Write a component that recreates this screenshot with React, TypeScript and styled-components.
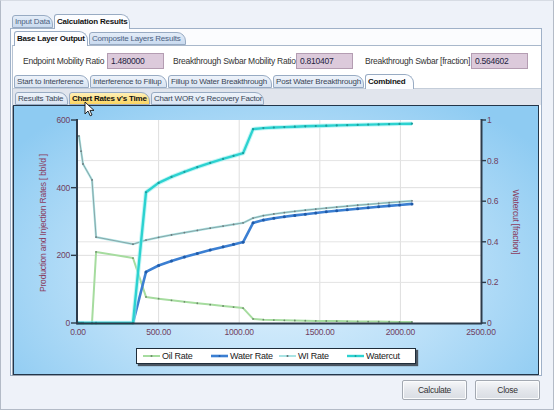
import React from 'react';
import styled, { createGlobalStyle } from 'styled-components';

const GlobalStyle = createGlobalStyle`
  html, body { margin: 0; padding: 0; background: #eef2f9; }
  body { font-family: 'Liberation Sans', Arial, sans-serif; }
`;

// ---- chart maths (page coordinates, the svg viewBox is offset to match) ----
const X0 = 78;
const X1 = 481;
const Y0 = 322;
const YT = 119;
const px = (t: number) => X0 + (t * (X1 - X0)) / 2500;
const pyL = (v: number) => Y0 - (v * (Y0 - YT)) / 600;
const pyR = (w: number) => Y0 - w * (Y0 - YT);

const early = [0, 6, 19, 31, 87, 112, 341];
const mid = [422, 500, 580, 660, 740, 820, 900, 965, 1024];
const late = [1086, 1150, 1215, 1280, 1345, 1410, 1475, 1540, 1605, 1670, 1735, 1800, 1865, 1930, 1995, 2072];
const fm = (t: number, e: number) => Math.pow((t - 422) / 602, e);
const fl = (t: number, e: number) => Math.pow((t - 1086) / 986, e);

const oil: number[][] = [
  [0, 0], [6, 0], [19, 0], [31, 0], [87, 0], [112, 210], [341, 192],
  ...mid.map((t) => [t, 77 - 33 * fm(t, 0.9)]),
  ...late.map((t) => [t, 12 - 9 * fl(t, 0.5)]),
];
const wi: number[][] = [
  [6, 553], [19, 508], [31, 470], [87, 423], [112, 254], [341, 233],
  ...mid.map((t) => [t, 245 + 51 * fm(t, 0.9)]),
  ...late.map((t) => [t, 310 + 51 * fl(t, 0.7)]),
];
const water: number[][] = [
  ...early.map((t) => [t, 0]),
  ...mid.map((t) => [t, 151 + 88 * fm(t, 0.75)]),
  ...late.map((t) => [t, 296 + 56 * fl(t, 0.7)]),
];
const watercut: number[][] = [
  ...early.map((t) => [t, 0]),
  ...mid.map((t) => [t, 0.644 + 0.193 * fm(t, 0.7)]),
  ...late.map((t) => [t, 0.955 + 0.027 * fl(t, 0.6)]),
];

const toPts = (d: number[][], right = false) =>
  d.map(([t, v]) => [px(t), right ? pyR(v) : pyL(v)]);
const toPath = (p: number[][]) => p.map(([x, y], i) => `${i ? 'L' : 'M'}${x.toFixed(1)} ${y.toFixed(1)}`).join(' ');

type SeriesProps = { pts: number[][]; color: string; width: number; glow?: string; dot: string; r: number };

const Series: React.FC<SeriesProps> = ({ pts, color, width, glow, dot, r }) => (
  <g>
    {glow && <path d={toPath(pts)} fill="none" stroke={glow} strokeWidth={width + 2} strokeLinejoin="round" opacity={0.6} />}
    <path d={toPath(pts)} fill="none" stroke={color} strokeWidth={width} strokeLinejoin="round" />
    {pts.map(([x, y], i) => (
      <circle key={i} cx={x} cy={y} r={r} fill={dot} />
    ))}
  </g>
);

const leftTicks = [0, 200, 400, 600];
const rightTicks = [0, 0.2, 0.4, 0.6, 0.8, 1];
const xTicks = [0, 500, 1000, 1500, 2000, 2500];

const RatesChart: React.FC = () => (
  <PlotSvg width={524} height={240} viewBox="14 105 524 240">
    <rect x={X0} y={YT} width={X1 - X0} height={Y0 - YT} fill="#ffffff" />
    {xTicks.slice(1, 5).map((t) => (
      <line key={t} x1={px(t)} x2={px(t)} y1={YT} y2={Y0} stroke="#dedede" />
    ))}
    {[200, 400].map((v) => (
      <line key={v} x1={X0} x2={X1} y1={pyL(v)} y2={pyL(v)} stroke="#dedede" />
    ))}
    {[0.2, 0.4, 0.6, 0.8].map((w) => (
      <line key={w} x1={X0} x2={X1} y1={pyR(w)} y2={pyR(w)} stroke="#e4e4e4" />
    ))}

    <Series pts={toPts(oil)} color="#a6dc9f" width={2} dot="#6d8a6a" r={0.9} />
    <Series pts={toPts(wi)} color="#a9e4e4" width={2.2} dot="#5f6e70" r={0.9} />
    <path d={toPath(toPts(wi))} fill="none" stroke="#7c8a8c" strokeWidth={0.7} />
    <Series pts={toPts(water)} color="#3b7fd2" width={2.6} dot="#1f5aa8" r={1.5} />
    <Series pts={toPts(watercut, true)} color="#2cd2d0" width={2.4} glow="#9ef0f0" dot="#1b9c9c" r={1.1} />

    <line x1={77} x2={77} y1={YT - 1} y2={Y0 + 1} stroke="#2d3b4a" strokeWidth={2} />
    <line x1={X1 + 0.5} x2={X1 + 0.5} y1={YT - 1} y2={Y0 + 1} stroke="#2d3b4a" strokeWidth={2} />
    <line x1={76} x2={X1 + 1} y1={Y0 + 0.5} y2={Y0 + 0.5} stroke="#2d3b4a" strokeWidth={2} />

    {leftTicks.map((v) => (
      <g key={v}>
        <line x1={71} x2={77} y1={pyL(v)} y2={pyL(v)} stroke="#2d3b4a" strokeWidth={1.4} />
        <AxisText x={70} y={pyL(v) + 3} textAnchor="end">{v}</AxisText>
      </g>
    ))}
    {rightTicks.map((w) => (
      <g key={w}>
        <line x1={X1} x2={X1 + 5} y1={pyR(w)} y2={pyR(w)} stroke="#2d3b4a" strokeWidth={1.4} />
        <AxisText x={X1 + 6} y={pyR(w) + 3}>{w}</AxisText>
      </g>
    ))}
    {xTicks.map((t) => (
      <AxisText key={t} x={px(t)} y={334} textAnchor="middle">{t.toFixed(2)}</AxisText>
    ))}

    <AxisTitle transform="translate(46 222) rotate(-90)" textAnchor="middle">
      Production and Injection Rates [ bbl/d ]
    </AxisTitle>
    <AxisTitle transform="translate(513 221) rotate(90)" textAnchor="middle">
      Watercut [fraction]
    </AxisTitle>
  </PlotSvg>
);

const legendItems = [
  { name: 'Oil Rate', color: '#a6dc9f', w: 2, dot: '#6d8a6a' },
  { name: 'Water Rate', color: '#3b7fd2', w: 2.6, dot: '#1f5aa8' },
  { name: 'WI Rate', color: '#a9e4e4', w: 2, dot: '#5f6e70' },
  { name: 'Watercut', color: '#2cd2d0', w: 2.4, dot: '#1b9c9c' },
];

const Cursor: React.FC = () => (
  <CursorSvg width={11} height={16} viewBox="0 0 11 16">
    <path d="M1 1 L1 13 L4 10 L6.2 14.8 L8 14 L5.9 9.4 L10 9.4 Z" fill="#ffffff" stroke="#111" strokeWidth={0.9} strokeLinejoin="round" />
  </CursorSvg>
);

export default function App() {
  return (
    <>
      <GlobalStyle />
      <Window>
        <TabRow>
          <Tab $w={41}>Input Data</Tab>
          <Tab $w={76} $active>Calculation Results</Tab>
        </TabRow>
        <OuterPanel>
          <TabRow>
            <Tab $w={74} $active>Base Layer Output</Tab>
            <Tab $w={97}>Composite Layers Results</Tab>
          </TabRow>
          <InnerPanel>
            <FieldRow>
              <Label $w={84}>Endpoint Mobility Ratio</Label>
              <Value $gap={9}>1.480000</Value>
              <Label $w={123}>Breakthrough Swbar Mobility Ratio</Label>
              <Value $gap={12}>0.810407</Value>
              <Label $w={106}>Breakthrough Swbar [fraction]</Label>
              <Value $gap={0}>0.564602</Value>
            </FieldRow>
            <PhaseTabs>
              <Tab $w={75} $light>Start to Interference</Tab>
              <Tab $w={77} $light>Interference to Fillup</Tab>
              <Tab $w={104} $light>Fillup to Water Breakthrough</Tab>
              <Tab $w={91} $light>Post Water Breakthrough</Tab>
              <Tab $w={49} $active>Combined</Tab>
            </PhaseTabs>
            <ViewBand>
              <TabRow>
                <Tab $w={53} $light>Results Table</Tab>
                <Tab $w={81} $hot>Chart Rates v's Time</Tab>
                <Tab $w={113} $light>Chart WOR v's Recovery Factor</Tab>
              </TabRow>
              <Cursor />
            </ViewBand>
            <ChartArea>
              <RatesChart />
              <Legend>
                {legendItems.map((it) => (
                  <LegendItem key={it.name}>
                    <svg width={17} height={6} viewBox="0 0 17 6">
                      <line x1={0} x2={17} y1={3} y2={3} stroke={it.color} strokeWidth={it.w} />
                      <circle cx={8.5} cy={3} r={1} fill={it.dot} />
                    </svg>
                    {it.name}
                  </LegendItem>
                ))}
              </Legend>
            </ChartArea>
          </InnerPanel>
        </OuterPanel>
        <Footer>
          <Button>Calculate</Button>
          <Button>Close</Button>
        </Footer>
      </Window>
    </>
  );
}

const Window = styled.div`
  position: relative;
  width: 554px;
  height: 410px;
  box-sizing: border-box;
  border: 1px solid #b3bbc7;
  border-top-color: #d7dce4;
  background: #eef2f9;
  padding: 12px 11px 0 9px;
  display: flex;
  flex-direction: column;
  font-size: 8.5px;
  letter-spacing: -0.25px;
  color: #1e1e1e;
  overflow: hidden;
`;

const TabRow = styled.div`
  display: flex;
  align-items: flex-end;
  height: 15px;
  padding-left: 2px;
  position: relative;
  z-index: 2;
`;

const Tab = styled.div<{ $w: number; $active?: boolean; $hot?: boolean; $light?: boolean }>`
  width: ${(p) => p.$w}px;
  height: ${(p) => (p.$active ? 15 : 13)}px;
  margin-bottom: ${(p) => (p.$active ? -1 : 0)}px;
  margin-right: 1px;
  box-sizing: border-box;
  flex: none;
  border: 1px solid #98abc3;
  border-bottom: ${(p) => (p.$active ? 'none' : '1px solid #98abc3')};
  border-radius: 3px 9px 0 0;
  padding: 0 0 0 2px;
  line-height: ${(p) => (p.$active ? 13 : 11)}px;
  white-space: nowrap;
  font-size: 8px;
  letter-spacing: -0.2px;
  font-weight: ${(p) => (p.$active || p.$hot ? 'bold' : 'normal')};
  color: ${(p) => (p.$active || p.$hot ? '#111' : p.$light ? '#3a4656' : '#4c6282')};
  background: ${(p) =>
    p.$active
      ? '#fcfdff'
      : p.$hot
      ? 'linear-gradient(#fff0b8, #fbd560)'
      : p.$light
      ? 'linear-gradient(#eef3fa, #d9e4f2)'
      : 'linear-gradient(#e4edf8, #c9daef)'};
`;

const OuterPanel = styled.div`
  height: 348px;
  box-sizing: border-box;
  border: 1px solid #9fb1c8;
  background: #fbfcfe;
  padding: 1px 0 0 1px;
  display: flex;
  flex-direction: column;
`;

const InnerPanel = styled.div`
  flex: 1;
  border-top: 1px solid #a9b8cb;
  border-left: 1px solid #b8c4d3;
  background: #ffffff;
  display: flex;
  flex-direction: column;
`;

const FieldRow = styled.div`
  display: flex;
  align-items: center;
  height: 16px;
  margin-top: 7px;
  padding-left: 10px;
  font-size: 8.5px;
  color: #333;
`;

const Label = styled.div<{ $w: number }>`
  width: ${(p) => p.$w}px;
  flex: none;
  white-space: nowrap;
`;

const Value = styled.div<{ $gap: number }>`
  width: 57px;
  height: 16px;
  margin-right: ${(p) => p.$gap}px;
  box-sizing: border-box;
  flex: none;
  border: 1px solid #b49db2;
  background: #dccadb;
  padding-left: 3px;
  line-height: 14px;
  color: #1d2240;
`;

const PhaseTabs = styled(TabRow)`
  margin-top: 5px;
  height: 14px;
  padding-left: 1px;
`;

const ViewBand = styled.div`
  position: relative;
  height: 17px;
  box-sizing: border-box;
  padding-top: 1px;
  background: #e1e5ed;
  border-top: 1px solid #c4cdd9;
`;

const CursorSvg = styled.svg`
  position: absolute;
  left: 71px;
  top: 12px;
  z-index: 5;
`;

const ChartArea = styled.div`
  height: 270px;
  margin-right: 2px;
  box-sizing: border-box;
  border: 1px solid #23364a;
  box-shadow: -1px 1px 0 #98a1ae;
  background: radial-gradient(ellipse 62% 78% at 50% 62%, #e2f2fd 0%, #b9dff8 55%, #8ecbf2 100%);
  display: flex;
  flex-direction: column;
  align-items: center;
  position: relative;
  z-index: 1;
`;

const PlotSvg = styled.svg`
  display: block;
  flex: none;
`;

const AxisText = styled.text`
  font-family: 'Liberation Sans', Arial, sans-serif;
  font-size: 8.5px;
  letter-spacing: -0.2px;
  fill: #70405f;
`;

const AxisTitle = styled(AxisText)`
  font-size: 8.5px;
  fill: #8a3d5f;
`;

const Legend = styled.div`
  width: 280px;
  height: 16px;
  margin-top: 2px;
  box-sizing: border-box;
  border: 1px solid #1f2d3a;
  background: #ffffff;
  box-shadow: 2px 2px 1px #4a5561;
  display: grid;
  grid-template-columns: repeat(4, 68px);
  align-items: center;
  padding-left: 6px;
`;

const LegendItem = styled.div`
  display: flex;
  align-items: center;
  gap: 2px;
  font-size: 9px;
  color: #222;
  white-space: nowrap;
`;

const Footer = styled.div`
  display: flex;
  justify-content: flex-end;
  gap: 8px;
  margin-top: 4px;
  padding-right: 2px;
`;

const Button = styled.div`
  width: 65px;
  height: 20px;
  box-sizing: border-box;
  border: 1px solid #a3a9b2;
  border-radius: 2px;
  background: linear-gradient(#f6f7f9, #e4e7ec 50%, #d9dde3);
  box-shadow: inset 0 0 0 1px #fbfcfd;
  text-align: center;
  line-height: 18px;
  font-size: 8.5px;
  color: #333;
`;
